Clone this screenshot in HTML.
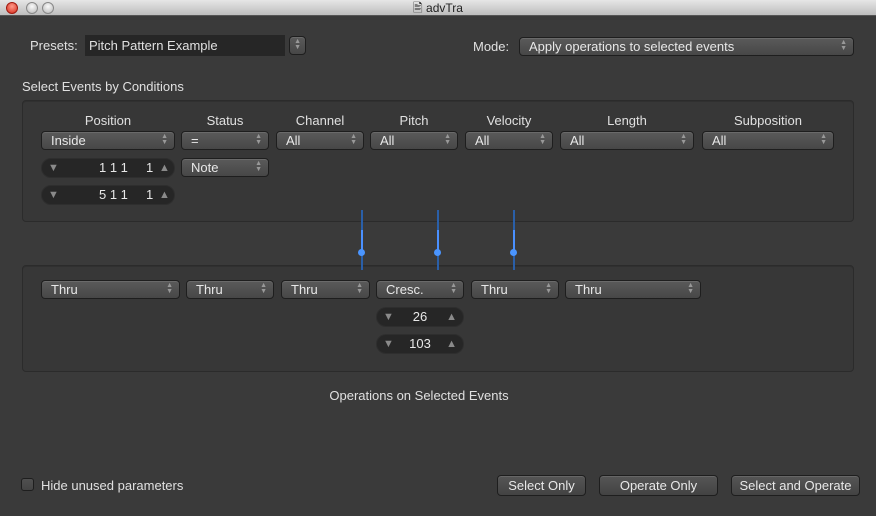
<!DOCTYPE html><html><head><style>
*{margin:0;padding:0;box-sizing:border-box}
body{width:876px;height:516px;background:#3a3a3a;font-family:"Liberation Sans",sans-serif;color:#e0e0e0;font-size:13px;position:relative;overflow:hidden}
.a{position:absolute}
.tb{left:0;top:0;width:876px;height:16px;background:linear-gradient(#e6e6e6,#bdbdbd);border-bottom:1px solid #555;color:#222;font-size:12px;text-align:center;line-height:16px}
.dot{width:12px;height:12px;border-radius:50%;top:2px;background:radial-gradient(circle at 50% 35%,#fafafa,#b5b5b5);border:1px solid #888}
.pan{border:1px solid #2b2b2b;border-radius:4px;background:#373737;box-shadow:inset 0 1px 0 #303030}
.pop{height:19px;border:1px solid #1e1e1e;border-radius:4px;background:linear-gradient(#5a5a5a,#474747);box-shadow:inset 0 1px 0 #6a6a6a;line-height:17px;padding-left:9px;color:#e8e8e8}
.ar{position:absolute;right:6px;top:2px;font-size:7px;line-height:6px;color:#999;text-align:center}
.st{height:20px;border-radius:10px;background:#262626;border:1px solid #2e2e2e;line-height:18px;color:#e8e8e8}
.tri{position:absolute;font-size:11px;color:#8a8a8a;top:0}
.hd{text-align:center;top:113px}
.ln{width:2px;background:#2a5fa8;top:210px;height:60px}
.ln i{position:absolute;left:0;top:20px;width:2px;height:22px;background:#4a90ff}
.kn{width:7px;height:7px;border-radius:50%;background:#4a95ff;top:249px}
.btn{height:21px;border:1px solid #1e1e1e;border-radius:4px;background:linear-gradient(#555,#434343);box-shadow:inset 0 1px 0 #666;text-align:center;line-height:19px;color:#e8e8e8}
</style></head><body>
<div class="a tb">🖹 advTra</div>
<div class="a dot" style="left:6px;background:radial-gradient(circle at 50% 35%,#ff9a8a,#d42a1a);border-color:#a01a10"></div>
<div class="a dot" style="left:26px"></div>
<div class="a dot" style="left:42px"></div>

<div class="a" style="left:30px;top:38px">Presets:</div>
<div class="a" style="left:85px;top:35px;width:200px;height:21px;background:#262626;line-height:21px;padding-left:4px">Pitch Pattern Example</div>
<div class="a pop" style="left:289px;top:36px;width:17px;height:19px;padding:0"><div class="ar" style="right:4px">▲<br>▼</div></div>
<div class="a" style="left:473px;top:39px">Mode:</div>
<div class="a pop" style="left:519px;top:37px;width:335px">Apply operations to selected events<div class="ar">▲<br>▼</div></div>
<div class="a" style="left:22px;top:79px">Select Events by Conditions</div>

<div class="a pan" style="left:22px;top:100px;width:832px;height:122px"></div>
<div class="a hd" style="left:41px;width:134px">Position</div>
<div class="a hd" style="left:181px;width:88px">Status</div>
<div class="a hd" style="left:276px;width:88px">Channel</div>
<div class="a hd" style="left:370px;width:88px">Pitch</div>
<div class="a hd" style="left:465px;width:88px">Velocity</div>
<div class="a hd" style="left:560px;width:134px">Length</div>
<div class="a hd" style="left:702px;width:132px">Subposition</div>

<div class="a pop" style="left:41px;top:131px;width:134px">Inside<div class="ar">▲<br>▼</div></div>
<div class="a pop" style="left:181px;top:131px;width:88px">=<div class="ar">▲<br>▼</div></div>
<div class="a pop" style="left:276px;top:131px;width:88px">All<div class="ar">▲<br>▼</div></div>
<div class="a pop" style="left:370px;top:131px;width:88px">All<div class="ar">▲<br>▼</div></div>
<div class="a pop" style="left:465px;top:131px;width:88px">All<div class="ar">▲<br>▼</div></div>
<div class="a pop" style="left:560px;top:131px;width:134px">All<div class="ar">▲<br>▼</div></div>
<div class="a pop" style="left:702px;top:131px;width:132px">All<div class="ar">▲<br>▼</div></div>
<div class="a pop" style="left:181px;top:158px;width:88px">Note<div class="ar">▲<br>▼</div></div>

<div class="a st" style="left:41px;top:158px;width:134px"><span class="tri" style="left:6px">▼</span><span class="a" style="left:57px">1 1 1</span><span class="a" style="left:104px">1</span><span class="tri" style="left:117px">▲</span></div>
<div class="a st" style="left:41px;top:185px;width:134px"><span class="tri" style="left:6px">▼</span><span class="a" style="left:57px">5 1 1</span><span class="a" style="left:104px">1</span><span class="tri" style="left:117px">▲</span></div>

<div class="a pan" style="left:22px;top:265px;width:832px;height:107px"></div>
<div class="a ln" style="left:361px"><i></i></div><div class="a kn" style="left:358px"></div>
<div class="a ln" style="left:437px"><i></i></div><div class="a kn" style="left:434px"></div>
<div class="a ln" style="left:513px"><i></i></div><div class="a kn" style="left:510px"></div>

<div class="a pop" style="left:41px;top:280px;width:139px">Thru<div class="ar">▲<br>▼</div></div>
<div class="a pop" style="left:186px;top:280px;width:88px">Thru<div class="ar">▲<br>▼</div></div>
<div class="a pop" style="left:281px;top:280px;width:89px">Thru<div class="ar">▲<br>▼</div></div>
<div class="a pop" style="left:376px;top:280px;width:88px">Cresc.<div class="ar">▲<br>▼</div></div>
<div class="a pop" style="left:471px;top:280px;width:88px">Thru<div class="ar">▲<br>▼</div></div>
<div class="a pop" style="left:565px;top:280px;width:136px">Thru<div class="ar">▲<br>▼</div></div>
<div class="a st" style="left:376px;top:307px;width:88px;text-align:center"><span class="tri" style="left:6px">▼</span>26<span class="tri" style="right:6px">▲</span></div>
<div class="a st" style="left:376px;top:334px;width:88px;text-align:center"><span class="tri" style="left:6px">▼</span>103<span class="tri" style="right:6px">▲</span></div>

<div class="a" style="left:0;width:838px;top:388px;text-align:center">Operations on Selected Events</div>

<div class="a" style="left:21px;top:478px;width:13px;height:13px;border:1px solid #1e1e1e;border-radius:3px;background:linear-gradient(#505050,#444)"></div>
<div class="a" style="left:41px;top:478px">Hide unused parameters</div>
<div class="a btn" style="left:497px;top:475px;width:89px">Select Only</div>
<div class="a btn" style="left:599px;top:475px;width:119px">Operate Only</div>
<div class="a btn" style="left:731px;top:475px;width:129px">Select and Operate</div>
</body></html>
